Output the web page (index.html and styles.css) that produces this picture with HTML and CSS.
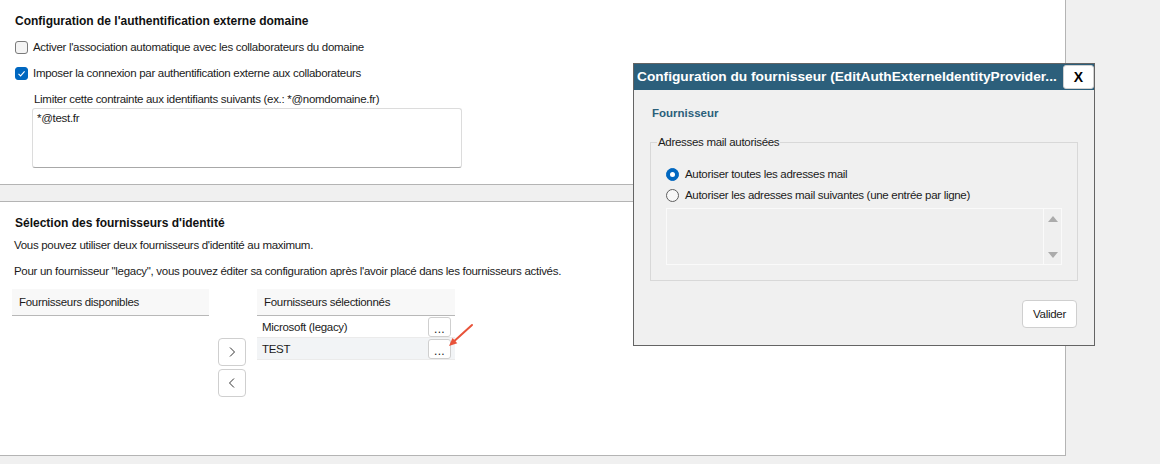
FILE: index.html
```html
<!DOCTYPE html>
<html lang="fr">
<head>
<meta charset="utf-8">
<title>Configuration</title>
<link rel="stylesheet" href="styles.css">
</head>
<body>
<div class="page">
  <div class="main">
    <section class="sec-auth">
      <h2 class="heading">Configuration de l'authentification externe domaine</h2>
      <div class="check-row">
        <span class="cb"></span>
        <span>Activer l'association automatique avec les collaborateurs du domaine</span>
      </div>
      <div class="check-row">
        <span class="cb checked"><svg width="9" height="9" viewBox="0 0 9 9"><polyline points="1.5,4.8 3.6,6.9 7.6,2.4" fill="none" stroke="#fff" stroke-width="1.1"/></svg></span>
        <span>Imposer la connexion par authentification externe aux collaborateurs</span>
      </div>
      <div class="limit-label">Limiter cette contrainte aux identifiants suivants (ex.: *@nomdomaine.fr)</div>
      <div class="textarea">*@test.fr</div>
    </section>
    <div class="band"></div>
    <section class="sec-prov">
      <h2 class="heading">Sélection des fournisseurs d'identité</h2>
      <p class="line l1">Vous pouvez utiliser deux fournisseurs d'identité au maximum.</p>
      <p class="line l2">Pour un fournisseur "legacy", vous pouvez éditer sa configuration après l'avoir placé dans les fournisseurs activés.</p>
      <div class="lists">
        <div class="list list-avail">
          <div class="list-head">Fournisseurs disponibles</div>
        </div>
        <div class="movers">
          <div class="mv"><svg width="8" height="12" viewBox="0 0 8 12"><polyline points="2,1.5 6.5,6 2,10.5" fill="none" stroke="#333" stroke-width="1"/></svg></div>
          <div class="mv"><svg width="8" height="12" viewBox="0 0 8 12"><polyline points="6,1.5 1.5,6 6,10.5" fill="none" stroke="#333" stroke-width="1"/></svg></div>
        </div>
        <div class="list list-sel">
          <div class="list-head">Fournisseurs sélectionnés</div>
          <div class="item"><span>Microsoft (legacy)</span><span class="dots">...</span></div>
          <div class="item alt"><span>TEST</span><span class="dots">...</span></div>
        </div>
      </div>
    </section>
  </div>

  <svg class="annot" width="34" height="32" viewBox="0 0 34 32">
    <line x1="28" y1="5" x2="10.9" y2="20.6" stroke="#e8533a" stroke-width="2" stroke-linecap="round"/>
    <polygon points="5,26 13.3,23.2 8.5,18" fill="#e8533a"/>
  </svg>

  <div class="dialog">
    <div class="dlg-title">
      <span class="dlg-title-text">Configuration du fournisseur (EditAuthExterneIdentityProvider...</span>
      <span class="dlg-close">X</span>
    </div>
    <div class="dlg-body">
      <div class="dlg-section">Fournisseur</div>
      <fieldset class="addr">
        <legend>Adresses mail autorisées</legend>
        <div class="radio-row first"><span class="radio on"><span class="dot"></span></span><span>Autoriser toutes les adresses mail</span></div>
        <div class="radio-row"><span class="radio"></span><span>Autoriser les adresses mail suivantes (une entrée par ligne)</span></div>
        <div class="mail-area">
          <div class="scroll"><span class="tri-up"></span><span class="tri-down"></span></div>
        </div>
      </fieldset>
      <div class="dlg-foot"><span class="btn-valider">Valider</span></div>
    </div>
  </div>
</div>
</body>
</html>
```
FILE: styles.css
```css
* { box-sizing: border-box; }
html, body { margin: 0; padding: 0; }
body {
  background: #f0f0f0;
  font-family: "Liberation Sans", Arial, sans-serif;
  font-size: 11.5px;
  letter-spacing: -0.3px;
  line-height: 16px;
  color: #1b1b1b;
  width: 1160px;
  height: 464px;
  overflow: hidden;
}
.page { position: relative; width: 1160px; height: 464px; }
.main {
  width: 1066px;
  height: 456px;
  background: #fff;
  border-right: 1px solid #b4b4b4;
  border-bottom: 1px solid #b4b4b4;
  display: flex;
  flex-direction: column;
}
.sec-auth { height: 184px; flex: none; padding: 13px 0 0 15px; }
.heading {
  margin: 0;
  font-size: 12px;
  font-weight: bold;
  letter-spacing: 0;
  line-height: 16px;
  color: #111;
}
.check-row { display: flex; align-items: center; gap: 5px; height: 16px; margin-top: 10px; }
.cb {
  width: 13px; height: 13px;
  border: 1px solid #7a7a7a;
  border-radius: 3px;
  background: #f4f4f4;
  flex: none;
}
.cb.checked {
  background: #0067c0;
  border-color: #0067c0;
  display: flex; align-items: center; justify-content: center;
}
.limit-label { margin: 10px 0 0 19px; }
.textarea {
  margin: 1px 0 0 17px;
  width: 430px; height: 60px;
  border: 1px solid #dcdcdc;
  border-bottom-color: #a8a8a8;
  border-radius: 3px;
  padding: 1px 4px;
}
.band {
  height: 18px; flex: none;
  background: #f0f0f0;
  border-top: 1px solid #b4b4b4;
  border-bottom: 1px solid #b4b4b4;
}
.sec-prov { flex: 1; padding: 13px 0 0 14px; }
.sec-prov .heading { margin-left: 1px; }
.line { margin: 6px 0 0; }
.line.l2 { margin-top: 10px; }
.lists { display: flex; align-items: flex-start; margin: 10px 0 0 -2px; }
.list { width: 197px; }
.list-head {
  height: 27px;
  line-height: 26px;
  background: #f8f8f8;
  border-bottom: 1px solid #b8b8b8;
  padding-left: 7px;
}
.movers { margin: 49px 0 0 9px; display: flex; flex-direction: column; gap: 3px; }
.mv {
  width: 28px; height: 28px;
  border: 1px solid #cfcfcf;
  border-radius: 4px;
  background: #fff;
  display: flex; align-items: center; justify-content: center;
}
.list-sel { margin-left: 11px; width: 198px; }
.item {
  height: 22px;
  display: flex; align-items: center; justify-content: space-between;
  padding: 0 4px 0 5px;
  border-bottom: 1px solid #ebebeb;
}
.item.alt { background: #f2f4f6; }
.dots {
  width: 23px; height: 20px;
  border: 1px solid #cfcfcf;
  border-radius: 3px;
  background: #fff;
  font-size: 12px;
  letter-spacing: 0.3px;
  text-align: center;
  line-height: 22px;
  color: #222;
}
.annot { position: absolute; left: 444px; top: 320px; }

.dialog {
  position: absolute;
  left: 633px; top: 63px;
  width: 462px; height: 283px;
  background: #f0f0f0;
  border: 1px solid #646464;
  display: flex; flex-direction: column;
}
.dlg-title {
  height: 26px; flex: none;
  background: #2c5f7b;
  position: relative;
  display: flex; align-items: center;
  padding-left: 3px;
}
.dlg-title-text {
  color: #fff;
  font-weight: bold;
  font-size: 13.7px;
  letter-spacing: 0;
  white-space: nowrap;
  overflow: hidden;
  text-overflow: ellipsis;
  max-width: 424px;
}
.dlg-close {
  position: absolute;
  right: 0; top: 1px;
  width: 31px; height: 24px;
  background: #fff;
  border: 1px solid #d0d0d0;
  border-radius: 3px;
  font-weight: bold;
  font-size: 14px;
  letter-spacing: 0;
  color: #000;
  display: flex; align-items: center; justify-content: center;
}
.dlg-body { padding: 15px 16px 0; }
.dlg-section {
  font-weight: bold;
  font-size: 11.5px;
  letter-spacing: 0;
  color: #2b5f7a;
  margin-left: 2px;
}
fieldset.addr {
  margin: 13px 0 0;
  padding: 0 0 15px;
  border: 1px solid #d8d8d8;
  min-width: 0;
}
fieldset.addr legend { margin-left: 6px; padding: 0 1px; line-height: 16px; }
.radio-row { display: flex; align-items: center; gap: 6px; height: 16px; margin: 5px 0 0 15px; }
.radio-row.first { margin-top: 16px; }
.radio {
  width: 13px; height: 13px;
  border-radius: 50%;
  border: 1px solid #5f5f5f;
  background: #f7f7f7;
  flex: none;
}
.radio.on {
  background: #0067c0;
  border-color: #0067c0;
  display: flex; align-items: center; justify-content: center;
}
.radio .dot { width: 5px; height: 5px; border-radius: 50%; background: #fff; }
.mail-area {
  margin: 5px 15px 0 15px;
  height: 57px;
  border: 1px solid #fafafa;
  background: #efefef;
  display: flex; justify-content: flex-end;
}
.scroll {
  width: 18px;
  border-left: 1px solid #fafafa;
  display: flex; flex-direction: column; justify-content: space-between; align-items: center;
  padding: 7px 0 6px;
}
.tri-up { width: 0; height: 0; border-left: 5px solid transparent; border-right: 5px solid transparent; border-bottom: 6px solid #ababab; }
.tri-down { width: 0; height: 0; border-left: 5px solid transparent; border-right: 5px solid transparent; border-top: 6px solid #ababab; }
.dlg-foot { display: flex; justify-content: flex-end; margin-top: 19px; padding-right: 1px; }
.btn-valider {
  width: 55px; height: 28px;
  background: #fff;
  border: 1px solid #cfcfcf;
  border-radius: 4px;
  display: flex; align-items: center; justify-content: center;
}
```
